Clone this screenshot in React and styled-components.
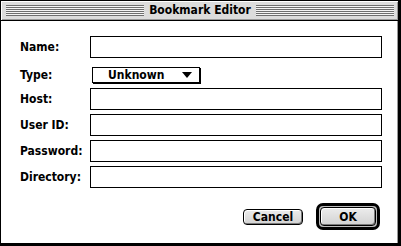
import React from "react";
import styled, { createGlobalStyle } from "styled-components";

const GlobalStyle = createGlobalStyle`
  html, body {
    margin: 0;
    padding: 0;
    background: #fff;
  }
  body {
    font-family: "DejaVu Sans Condensed", "DejaVu Sans", sans-serif;
  }
`;

const Window = styled.div`
  box-sizing: border-box;
  width: 401px;
  height: 246px;
  border: 1px solid #000;
  border-right-width: 3px;
  border-bottom-width: 3px;
  display: flex;
  flex-direction: column;
  background: #fff;
`;

const TitleBar = styled.div`
  height: 19px;
  border-bottom: 1px solid #000;
  background: #dcdcdc;
  display: flex;
  align-items: center;
  padding: 0 4px 0 5px;
  box-shadow: inset 1px 1px #fff, inset -1px -1px #999;
`;

const Stripes = styled.div`
  flex: 1;
  height: 11px;
  background: repeating-linear-gradient(
    to bottom,
    #6e6e6e 0,
    #6e6e6e 1px,
    #f4f4f4 1px,
    #f4f4f4 2px
  );
`;

const Title = styled.div`
  padding: 0 5px;
  font-size: 12px;
  font-weight: 700;
  color: #000;
  line-height: 19px;
  white-space: nowrap;
`;

const Content = styled.div`
  flex: 1;
  display: flex;
  flex-direction: column;
  padding: 15px 0 0 19px;
  border-right: 1px solid #999;
`;

const Form = styled.div`
  display: flex;
  flex-direction: column;
  gap: 4px;
`;

const Row = styled.div`
  display: flex;
  align-items: ${(p) => (p.$popup ? "flex-end" : "center")};
  height: 22px;
`;

const Label = styled.div`
  width: 70px;
  font-size: 12px;
  font-weight: 700;
  color: #000;
  align-self: center;
  padding-top: ${(p) => (p.$popup ? "4px" : "0")};
`;

const Field = styled.div`
  box-sizing: border-box;
  width: 292px;
  height: 22px;
  border: 1px solid #000;
  background: #fff;
`;

const Popup = styled.div`
  box-sizing: border-box;
  width: 108px;
  height: 16px;
  margin: 0 0 1px 2px;
  border: 1px solid #000;
  box-shadow: 1px 1px #000;
  background: #fff;
  display: flex;
  align-items: center;
  padding: 0 7px 0 15px;
  font-size: 12px;
  font-weight: 700;
`;

const PopupText = styled.span`
  flex: 1;
  line-height: 14px;
`;

const Arrow = styled.span`
  width: 0;
  height: 0;
  border-left: 5px solid transparent;
  border-right: 5px solid transparent;
  border-top: 6px solid #000;
`;

const Buttons = styled.div`
  display: flex;
  justify-content: flex-end;
  align-items: center;
  gap: 13px;
  margin-top: 15px;
  padding-right: 17px;
`;

const Button = styled.div`
  box-sizing: border-box;
  width: ${(p) => p.$w}px;
  height: ${(p) => p.$h}px;
  border: 1px solid #000;
  border-radius: 4px;
  background: linear-gradient(#ececec, #d2d2d2);
  box-shadow: inset 1px 1px #fff, inset -1px -1px #7a7a7a;
  display: flex;
  align-items: center;
  justify-content: center;
  font-size: 12px;
  font-weight: 700;
  color: #000;
`;

const DefaultRing = styled.div`
  box-sizing: border-box;
  width: 64px;
  height: 27px;
  border: 3px solid #000;
  border-radius: 7px;
  background: #bdbdbd;
  display: flex;
  align-items: center;
  justify-content: center;
`;

const fields = ["Name:", "Type:", "Host:", "User ID:", "Password:", "Directory:"];

export default function App() {
  return (
    <>
      <GlobalStyle />
      <Window>
        <TitleBar>
          <Stripes />
          <Title>Bookmark Editor</Title>
          <Stripes />
        </TitleBar>
        <Content>
          <Form>
            {fields.map((f) =>
              f === "Type:" ? (
                <Row key={f} $popup>
                  <Label $popup>{f}</Label>
                  <Popup>
                    <PopupText>Unknown</PopupText>
                    <Arrow />
                  </Popup>
                </Row>
              ) : (
                <Row key={f}>
                  <Label>{f}</Label>
                  <Field />
                </Row>
              )
            )}
          </Form>
          <Buttons>
            <Button $w={60} $h={16}>Cancel</Button>
            <DefaultRing>
              <Button $w={56} $h={19}>OK</Button>
            </DefaultRing>
          </Buttons>
        </Content>
      </Window>
    </>
  );
}
